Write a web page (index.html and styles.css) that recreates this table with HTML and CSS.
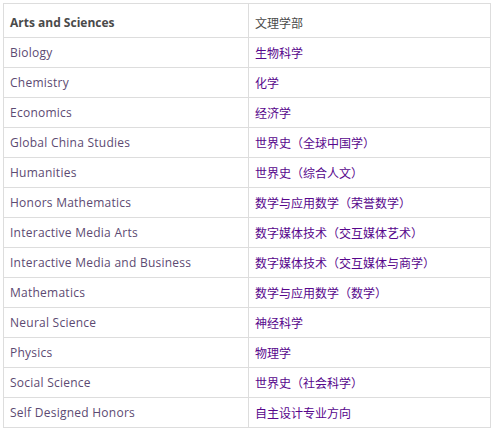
FILE: index.html
```html
<!DOCTYPE html>
<html lang="en">
<head>
    <meta charset="UTF-8">
    <meta name="viewport" content="width=device-width, initial-scale=1.0">
    <title>Arts and Sciences</title>
    <link rel="stylesheet" href="styles.css">
</head>
<body>
    <table class="majors">
        <thead>
            <tr>
                <th>Arts and Sciences</th>
                <th class="zh">文理学部</th>
            </tr>
        </thead>
        <tbody>
            <tr><td>Biology</td><td class="zh">生物科学</td></tr>
            <tr><td>Chemistry</td><td class="zh">化学</td></tr>
            <tr><td>Economics</td><td class="zh">经济学</td></tr>
            <tr><td>Global China Studies</td><td class="zh">世界史（全球中国学）</td></tr>
            <tr><td>Humanities</td><td class="zh">世界史（综合人文）</td></tr>
            <tr><td>Honors Mathematics</td><td class="zh">数学与应用数学（荣誉数学）</td></tr>
            <tr><td>Interactive Media Arts</td><td class="zh">数字媒体技术（交互媒体艺术）</td></tr>
            <tr><td>Interactive Media and Business</td><td class="zh">数字媒体技术（交互媒体与商学）</td></tr>
            <tr><td>Mathematics</td><td class="zh">数学与应用数学（数学）</td></tr>
            <tr><td>Neural Science</td><td class="zh">神经科学</td></tr>
            <tr><td>Physics</td><td class="zh">物理学</td></tr>
            <tr><td>Social Science</td><td class="zh">世界史（社会科学）</td></tr>
            <tr><td>Self Designed Honors</td><td class="zh">自主设计专业方向</td></tr>
        </tbody>
    </table>
</body>
</html>
```
FILE: styles.css
```css
html, body {
    margin: 0;
    padding: 0;
    background-color: #ffffff;
}
body {
    padding: 3px;
    font-family: "Open Sans", "Noto Sans CJK SC", sans-serif;
}
.majors {
    width: 488px;
    border-collapse: collapse;
    table-layout: fixed;
}
.majors th,
.majors td {
    border: 1px solid #dddddd;
    padding: 0 6px;
    text-align: left;
    vertical-align: middle;
    font-size: 12px;
    white-space: nowrap;
}
.majors th {
    height: 30px;
    padding-top: 3px;
    font-weight: 700;
    color: #4a4a4a;
}
.majors td {
    height: 29px;
    color: #5c4a72;
    letter-spacing: 0.25px;
}
.majors th:first-child,
.majors td:first-child {
    width: 232px;
}
.majors .zh {
    font-family: "Noto Sans CJK SC", sans-serif;
    letter-spacing: 0;
}
.majors th.zh {
    font-weight: 400;
    color: #4a4a4a;
}
.majors td.zh {
    color: #57068c;
}
```
